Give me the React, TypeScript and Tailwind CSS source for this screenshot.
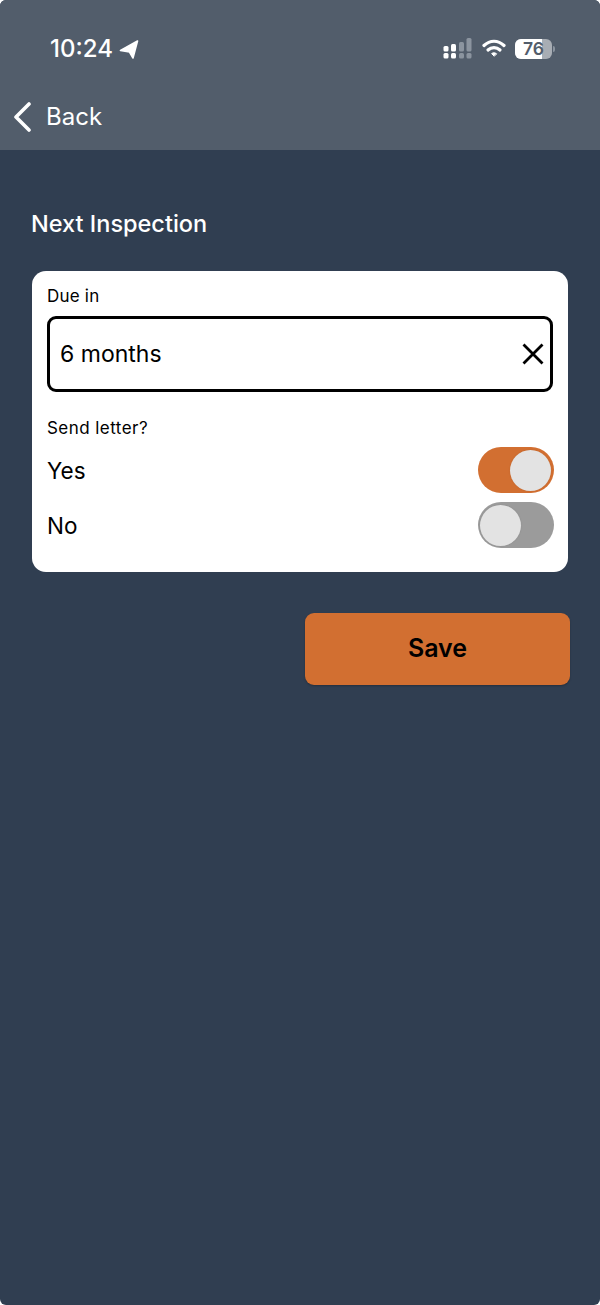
import React from "react";

const Toggle = ({ on }: { on: boolean }) => {
  return (
    <div
      className={
        on
          ? "-mr-[1px] flex h-[46px] w-[76px] items-center justify-end rounded-full bg-[#d26f31] px-[3px]"
          : "-mr-[1px] flex h-[46px] w-[76px] items-center justify-start rounded-full bg-[#9b9b9b] px-[2px]"
      }
    >
      <div className="h-[41px] w-[41px] rounded-full bg-[#e3e3e3] shadow-[0_0_2px_rgba(0,0,0,0.1)]" />
    </div>
  );
};

const StatusBar = () => {
  return (
    <div className="flex h-[88px] items-start justify-between pl-[50px] pr-[45px] pt-[35px]">
      <div className="flex items-center gap-[6px]">
        <span className="text-[24px] leading-[28px] font-medium text-white">10:24</span>
        <svg width="20" height="20" viewBox="0 0 20 20" className="mt-[-1px]">
          <path d="M18.5 2 L1.5 11.5 L10.5 13 L14 19 Z" fill="#fff" stroke="#fff" strokeWidth="1.6" strokeLinejoin="round" />
        </svg>
      </div>
      <div className="mt-[3px] flex items-center gap-[9px]">
        {/* signal dots */}
        <svg width="29" height="21" viewBox="0 0 29 21">
          <rect x="0.5" y="8" width="5" height="5.5" rx="1.5" fill="#fff" />
          <rect x="0.5" y="15" width="5" height="5.5" rx="1.5" fill="#fff" />
          <rect x="8" y="6" width="5" height="7.5" rx="1.5" fill="#fff" />
          <rect x="8" y="15" width="5" height="5.5" rx="1.5" fill="#fff" />
          <rect x="16" y="4" width="5" height="9.5" rx="1.5" fill="#8b949f" />
          <rect x="16" y="15" width="5" height="5.5" rx="1.5" fill="#8b949f" />
          <rect x="23.5" y="0" width="5" height="13.5" rx="1.5" fill="#8b949f" />
          <rect x="23.5" y="15" width="5" height="5.5" rx="1.5" fill="#8b949f" />
        </svg>
        <svg width="24" height="19" viewBox="0 0 24 19" fill="none" stroke="#fff" strokeLinecap="round" className="ml-[1px]">
          <path d="M2 6.5 C8 0.8 16 0.8 22 6.5" strokeWidth="3.2" />
          <path d="M6 11 C9.5 7.8 14.5 7.8 18 11" strokeWidth="3.2" />
          <path d="M12 17 L9.6 14.6 C11 13.5 13 13.5 14.4 14.6 Z" fill="#fff" strokeWidth="1" />
        </svg>
        <div className="flex items-center gap-[1px]">
          <div className="relative flex h-[20px] w-[37px] items-center justify-center overflow-hidden rounded-[6px] bg-[#a8adb4]">
            <div className="absolute inset-y-0 left-0 w-[27px] bg-white" />
            <span className="relative text-[17.5px] leading-[20px] font-semibold text-[#525d6b]">76</span>
          </div>
          <div className="h-[6px] w-[2px] rounded-r-sm bg-[#8b949f]" />
        </div>
      </div>
    </div>
  );
};

export default function App() {
  return (
    <div className="flex min-h-[1305px] flex-col overflow-hidden rounded-[6px] bg-[#303e51] font-['Inter',sans-serif]">
      {/* Header */}
      <div className="h-[150px] bg-[#525d6b]">
        <StatusBar />
        <div className="flex items-center gap-[15px] pl-[14px] pt-[14px]">
          <svg width="17" height="30" viewBox="0 0 17 30" fill="none" stroke="#fff" strokeWidth="3.6" strokeLinecap="round" strokeLinejoin="round">
            <path d="M15 2 L2 15 L15 28" />
          </svg>
          <span className="text-[24px] leading-[30px] text-white">Back</span>
        </div>
      </div>

      <div className="flex flex-col pl-[32px] pr-[30px]">
        <h1 className="ml-[-1px] mt-[60px] text-[23.5px] leading-[28px] font-medium text-white">Next Inspection</h1>

        {/* Card */}
        <div className="mt-[33px] mr-[2px] flex h-[301px] flex-col rounded-[14px] bg-white pl-[15px] pr-[15px] pt-[15px]">
          <label className="text-[17px] leading-[20px] tracking-[0.2px] text-black">Due in</label>
          <div className="mt-[10px] flex h-[76px] items-center justify-between rounded-[9px] border-[3px] border-black pl-[10px] pr-[5px]">
            <span className="text-[23px] leading-[28px] text-black">6 months</span>
            <svg width="24" height="24" viewBox="0 0 24 24" fill="none" stroke="#000" strokeWidth="2.8">
              <path d="M2.5 2.5 L21.5 21.5 M21.5 2.5 L2.5 21.5" />
            </svg>
          </div>
          <label className="mt-[26px] text-[17px] leading-[20px] tracking-[0.45px] text-black">Send letter?</label>
          <div className="mt-[9px] flex items-center justify-between">
            <span className="mt-[2px] text-[22.5px] leading-[28px] text-black">Yes</span>
            <Toggle on={true} />
          </div>
          <div className="mt-[9px] flex items-center justify-between">
            <span className="mt-[2px] text-[22.5px] leading-[28px] text-black">No</span>
            <Toggle on={false} />
          </div>
        </div>

        {/* Save */}
        <div className="mt-[41px] flex justify-end">
          <button className="h-[72px] w-[265px] rounded-[9px] bg-[#d26f31] text-[25px] font-semibold text-black shadow-[0_1px_2px_rgba(0,0,0,0.25)]">
            Save
          </button>
        </div>
      </div>
    </div>
  );
}
